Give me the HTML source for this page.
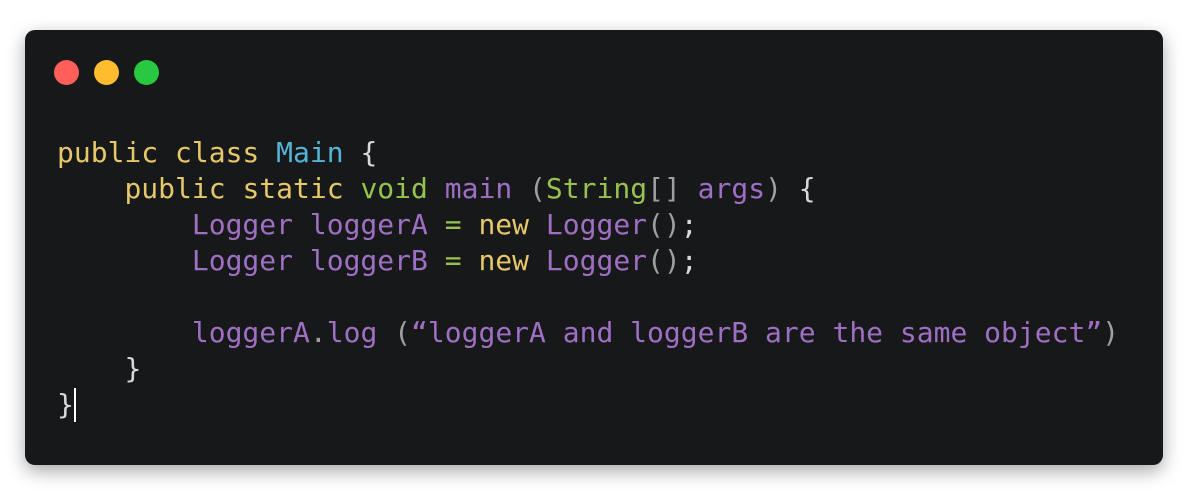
<!DOCTYPE html>
<html><head><meta charset="utf-8"><style>
html,body{margin:0;padding:0;background:#fff;width:1190px;height:498px;overflow:hidden}
.win{position:absolute;left:25px;top:30px;width:1138px;height:435px;background:#17181a;border-radius:10px;box-shadow:0 6px 18px rgba(0,0,0,0.35)}
.dot{position:absolute;top:30px;width:25px;height:25px;border-radius:50%}
pre{position:absolute;left:32px;top:105px;margin:0;font-family:"DejaVu Sans Mono","Liberation Mono",monospace;font-size:28px;line-height:36px;color:#d4d4d4}
.y{color:#e6c76a}.b{color:#55b3d6}.g{color:#97c24f}.p{color:#9f6fc3}.w{color:#d8d8d8}.gr{color:#a0a0a0}
.cur{display:inline-block;width:2px;height:34px;background:#fff;vertical-align:-8px}
</style></head><body>
<div class="win">
<div class="dot" style="left:28.5px;background:#fe5f58;"></div>
<div class="dot" style="left:68.5px;background:#febc2e;"></div>
<div class="dot" style="left:108.5px;background:#28c840;"></div>
<pre><span class="y">public class</span> <span class="b">Main</span> <span class="w">{</span>
    <span class="y">public static</span> <span class="g">void</span> <span class="p">main</span> <span class="gr">(</span><span class="g">String</span><span class="gr">[]</span> <span class="p">args</span><span class="gr">)</span> <span class="w">{</span>
        <span class="p">Logger loggerA</span> <span class="g">=</span> <span class="y">new</span> <span class="p">Logger</span><span class="gr">()</span><span class="w">;</span>
        <span class="p">Logger loggerB</span> <span class="g">=</span> <span class="y">new</span> <span class="p">Logger</span><span class="gr">()</span><span class="w">;</span>

        <span class="p">loggerA</span><span class="gr">.</span><span class="p">log</span> <span class="gr">(</span><span class="p">“loggerA and loggerB are the same object”</span><span class="gr">)</span>
    <span class="w">}</span>
<span class="w">}</span><span class="cur"></span></pre>
</div>
</body></html>
